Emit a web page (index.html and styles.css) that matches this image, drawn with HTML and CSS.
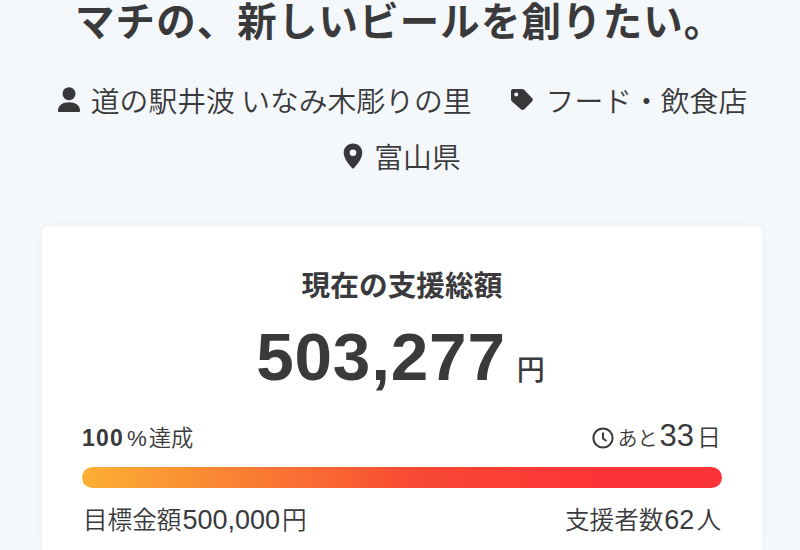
FILE: index.html
```html
<!DOCTYPE html>
<html lang="ja">
<head>
    <meta charset="UTF-8">
    <meta name="viewport" content="width=device-width, initial-scale=1.0">
    <link rel="stylesheet" href="styles.css">
    <title>マチの、新しいビールを創りたい。</title>
</head>
<body>

    <h1>マチの、新しいビールを創りたい。</h1>

    <div class="meta">
        <span class="meta-item owner">
            <svg width="24" height="28" viewBox="0 0 24 28"><circle cx="12" cy="7.700" r="6.500"/><path d="M1 25v-.5C1 19.500 5.500 16.300 12 16.300S23 19.500 23 24.500V25q0 1-1 1H2q-1 0-1-1z"/></svg>
            <span>道の駅井波 いなみ木彫りの里</span>
        </span>
        <span class="meta-item category">
            <svg width="24" height="24" viewBox="0 0 24 24"><path fill-rule="evenodd" d="M3 1h9c.8 0 1.500.3 2 .8l8 8.200c1.100 1.100 1.100 2.500 0 3.600l-7.600 7.700c-1.100 1-2.500 1-3.600 0L2 13.500c-.6-.6-1-1.300-1-2.200V3c0-1.200.8-2 2-2zm3.200 3.500a2 2 0 1 0 0 4 2 2 0 0 0 0-4z"/></svg>
            <span>フード・飲食店</span>
        </span>
    </div>
    <div class="meta">
        <span class="meta-item place">
            <svg width="20" height="26" viewBox="0 0 20 26"><path fill-rule="evenodd" d="M10 .5C4.700.5.700 4.500.700 9.600c0 6 5.300 12.300 8.200 15.400.7.7 1.500.7 2.200 0 2.900-3.100 8.200-9.400 8.200-15.400C19.300 4.500 15.300.5 10 .5zm0 6a3.300 3.300 0 1 1 0 6.600 3.300 3.300 0 0 1 0-6.600z"/></svg>
            <span>富山県</span>
        </span>
    </div>

    <div class="card">
        <h2>現在の支援総額</h2>
        <div class="amount">503,277<span class="yen">円</span></div>
        <div class="row status">
            <div class="rate"><b>100</b><span class="percent">%</span>達成</div>
            <div class="days">
                <svg width="22" height="22" viewBox="0 0 22 22"><circle cx="11" cy="11" r="9.600"/><path d="M11 5.500V11.500L14.500 14"/></svg>
                <span class="left">あと</span><span class="num">33</span><span class="day">日</span>
            </div>
        </div>
        <div class="bar"></div>
        <div class="row total">
            <div>目標金額<span class="num">500,000</span>円</div>
            <div>支援者数<span class="num">62</span>人</div>
        </div>
    </div>

</body>
</html>
```
FILE: styles.css
```css
body {
    margin: 0;
    height: 550px;
    background-color: #f4f8fa;
    color: #3a3a3c;
    font-family: 'Noto Sans CJK JP', sans-serif;
}

h1 {
    margin: 0;
    padding-left: 75px;
    font-size: 39.4px;
    font-weight: 600;
    line-height: 37px;
    letter-spacing: 1.2px;
    white-space: nowrap;
}

.meta {
    display: flex;
    justify-content: center;
    gap: 38px;
    height: 56px;
    padding-left: 4px;
    font-size: 28.8px;
    font-weight: 350;
    line-height: 54px;
    white-space: nowrap;
}

h1 + .meta {
    margin-top: 35px;
}

.meta-item {
    display: flex;
    align-items: center;
}

.meta svg {
    fill: #38383a;
}

.owner svg {
    margin-right: 10px;
}

.category svg {
    margin-right: 12px;
}

.place svg {
    margin-right: 11px;
}

.card {
    box-sizing: border-box;
    width: 720px;
    height: 324px;
    margin: 42px 0 0 42px;
    padding: 38px 40px 0;
    background-color: #fff;
    border-radius: 6px 6px 0 0;
    box-shadow: 0 0 10px rgba(80, 80, 160, 0.04);
}

h2 {
    margin: 0;
    font-size: 28.7px;
    font-weight: 600;
    line-height: 40px;
    text-align: center;
}

.amount {
    display: flex;
    justify-content: center;
    align-items: baseline;
    height: 80px;
    margin-top: 13px;
    padding-right: 3px;
    font-family: 'Liberation Sans', sans-serif;
    font-size: 67.5px;
    font-weight: bold;
    line-height: 80px;
    letter-spacing: 0.8px;
}

.yen {
    margin-left: 11px;
    font-family: 'Noto Sans CJK JP', sans-serif;
    font-size: 28px;
    font-weight: 500;
    letter-spacing: 0;
}

.row {
    display: flex;
    justify-content: space-between;
    align-items: baseline;
    white-space: nowrap;
    font-weight: 350;
}

.status {
    height: 40px;
    margin-top: 19px;
    line-height: 40px;
    font-size: 22.3px;
}

.rate b {
    font-family: 'Liberation Sans', sans-serif;
    font-size: 23px;
    font-weight: bold;
    letter-spacing: 1.2px;
}

.percent {
    margin: 0 2px 0 3px;
    font-family: 'Liberation Sans', sans-serif;
}

.days {
    display: flex;
    align-items: baseline;
    margin-right: 1px;
}

.days svg {
    align-self: center;
    margin: 2px 4px 0 0;
    fill: none;
    stroke: #3a3a3c;
    stroke-width: 2;
}

.left {
    font-size: 20px;
}

.num {
    font-family: 'Liberation Sans', sans-serif;
    font-weight: normal;
}

.days .num {
    margin: 0 3px 0 2px;
    font-size: 31px;
}

.day {
    font-size: 24px;
}

.bar {
    height: 21px;
    margin-top: 11px;
    border-radius: 11px;
    background: linear-gradient(to right, #fbb034, #f95f33 42%, #f74933 52%, #fd3437 80%, #fd3437);
}

.total {
    margin: 10px 1px 0;
    line-height: 40px;
    font-size: 24.6px;
}

.total .num {
    margin: 0 2px 0 1px;
    font-size: 27px;
}
```
